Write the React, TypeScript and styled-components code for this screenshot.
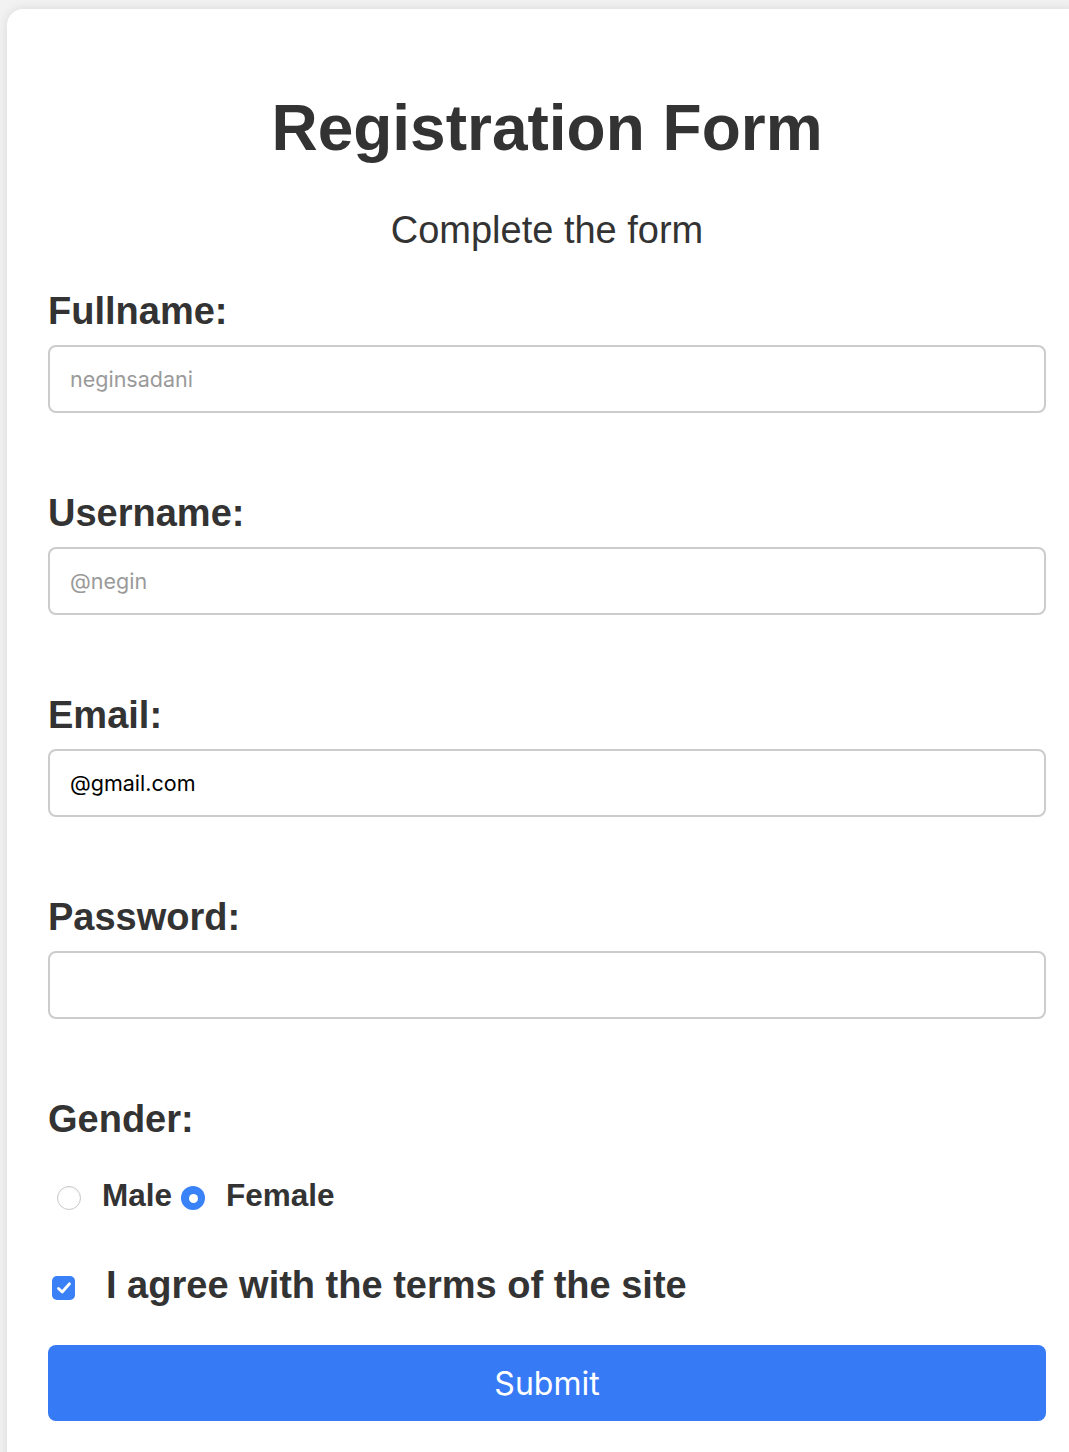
import React from "react";
import styled, { createGlobalStyle } from "styled-components";

const Global = createGlobalStyle`
  html, body {
    margin: 0;
    padding: 0;
    background: #f2f2f2;
    overflow: hidden;
  }
  * { box-sizing: border-box; }
`;

const Card = styled.div`
  margin: 9px 0 0 7px;
  width: 1080px;
  min-height: 1520px;
  padding: 82px 41px 40px;
  background: #ffffff;
  border-radius: 16px;
  box-shadow: 0 0 12px rgba(0, 0, 0, 0.1);
  font-family: "Liberation Sans", Arial, sans-serif;
  color: #333333;
`;

const Title = styled.h1`
  margin: 0;
  font-size: 64px;
  line-height: 74px;
  font-weight: 700;
  text-align: center;
`;

const Subtitle = styled.p`
  margin: 43px 0 0;
  font-size: 38px;
  line-height: 44px;
  font-weight: 400;
  text-align: center;
`;

const Form = styled.form`
  display: flex;
  flex-direction: column;
  margin-top: 38px;
`;

const Field = styled.div`
  display: flex;
  flex-direction: column;
  gap: 13px;
  margin-bottom: 79px;
`;

const Label = styled.label`
  font-size: 38px;
  line-height: 42px;
  font-weight: 700;
`;

const Input = styled.input`
  height: 68px;
  width: 100%;
  border: 2px solid #cccccc;
  border-radius: 8px;
  padding: 0 20px;
  font-family: Inter, "Open Sans", sans-serif;
  font-size: 21.5px;
  color: #000000;
  background: #fff;
  outline: none;
  &::placeholder {
    color: #9a9a9a;
  }
`;

const RadioRow = styled.div`
  display: flex;
  align-items: center;
  height: 40px;
  margin-top: 35px;
`;

const RadioDot = styled.span<{ $checked?: boolean }>`
  width: 24px;
  height: 24px;
  border-radius: 50%;
  margin: 6px 21px 0 9px;
  flex-shrink: 0;
  background: ${(p) => (p.$checked ? "#3a82f7" : "#ffffff")};
  border: ${(p) => (p.$checked ? "none" : "1px solid #c9c9c9")};
  box-shadow: ${(p) => (p.$checked ? "none" : "inset 0 1px 2px rgba(0,0,0,0.05)")};
  display: flex;
  align-items: center;
  justify-content: center;
  &::after {
    content: "";
    display: ${(p) => (p.$checked ? "block" : "none")};
    width: 9px;
    height: 9px;
    border-radius: 50%;
    background: #ffffff;
  }
`;

const OptionText = styled.span`
  font-size: 31.5px;
  font-weight: 700;
  line-height: 40px;
`;

const CheckRow = styled.div`
  display: flex;
  align-items: center;
  height: 44px;
  margin-top: 48px;
`;

const CheckBox = styled.span`
  width: 23px;
  height: 24px;
  margin: 5px 31px 0 4px;
  border-radius: 5px;
  background: #3a80f6;
  display: flex;
  align-items: center;
  justify-content: center;
  flex-shrink: 0;
`;

const CheckText = styled.span`
  font-size: 38px;
  font-weight: 700;
  line-height: 44px;
`;

const SubmitButton = styled.button`
  margin-top: 38px;
  height: 76px;
  width: 100%;
  border: none;
  border-radius: 8px;
  background: #367af6;
  color: #ffffff;
  font-family: Inter, "Open Sans", sans-serif;
  font-size: 32px;
  font-weight: 400;
  cursor: pointer;
`;

export default function App() {
  return (
    <>
      <Global />
      <Card>
        <Title>Registration Form</Title>
        <Subtitle>Complete the form</Subtitle>
        <Form onSubmit={(e) => e.preventDefault()}>
          <Field>
            <Label>Fullname:</Label>
            <Input placeholder="neginsadani" />
          </Field>
          <Field>
            <Label>Username:</Label>
            <Input placeholder="@negin" />
          </Field>
          <Field>
            <Label>Email:</Label>
            <Input defaultValue="@gmail.com" />
          </Field>
          <Field>
            <Label>Password:</Label>
            <Input type="password" />
          </Field>
          <Label>Gender:</Label>
          <RadioRow>
            <RadioDot />
            <OptionText>Male</OptionText>
            <RadioDot $checked />
            <OptionText>Female</OptionText>
          </RadioRow>
          <CheckRow>
            <CheckBox>
              <svg width="16" height="14" viewBox="0 0 16 14" fill="none">
                <path
                  d="M2.5 7.5 L6.2 11 L13.5 2.8"
                  stroke="#ffffff"
                  strokeWidth="2.8"
                  strokeLinecap="round"
                  strokeLinejoin="round"
                />
              </svg>
            </CheckBox>
            <CheckText>I agree with the terms of the site</CheckText>
          </CheckRow>
          <SubmitButton type="submit">Submit</SubmitButton>
        </Form>
      </Card>
    </>
  );
}
